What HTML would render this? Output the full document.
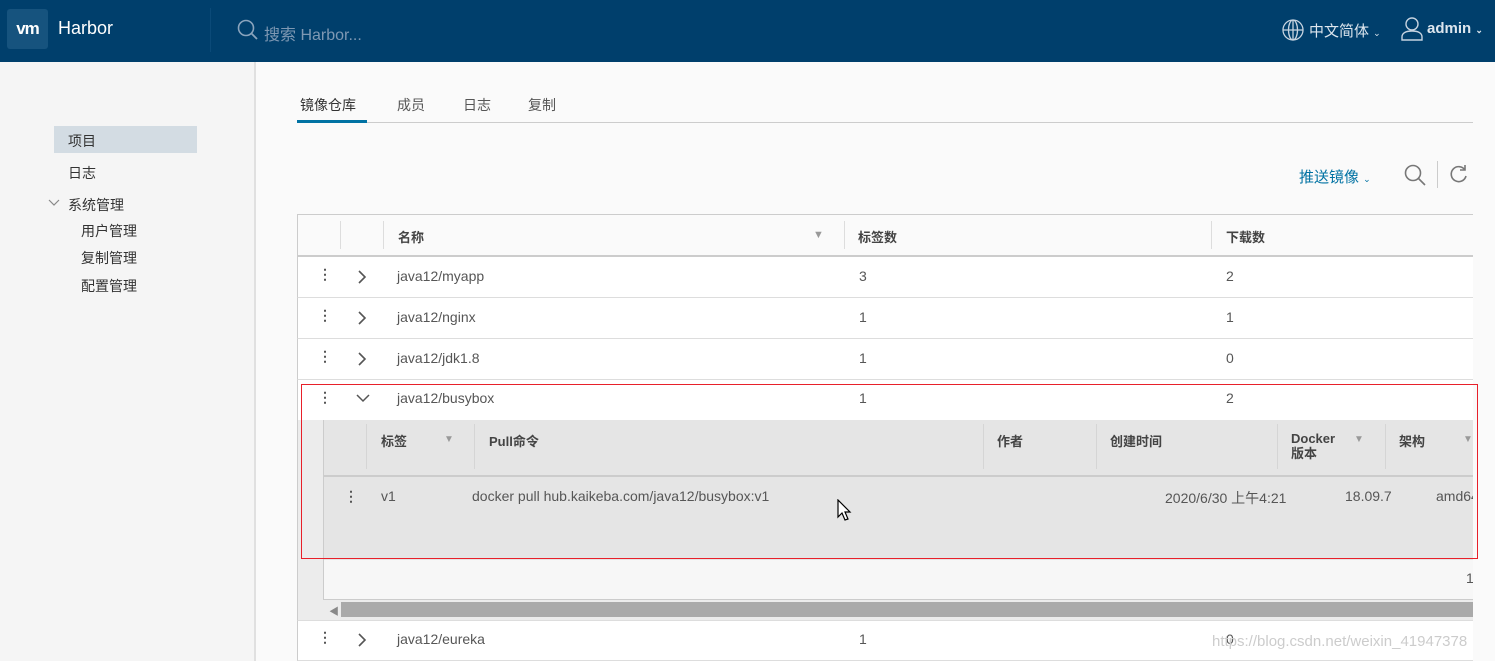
<!DOCTYPE html>
<html><head><meta charset="utf-8"><style>
*{margin:0;padding:0;box-sizing:border-box}
body{width:1495px;height:661px;overflow:hidden;background:#fafafa;font-family:"Liberation Sans","Noto Sans CJK SC",sans-serif;color:#565656;font-size:14px;position:relative}
.a{position:absolute;white-space:nowrap}
.hdr{left:0;top:0;width:1495px;height:62px;background:#003f6c}
.side{left:0;top:62px;width:256px;height:599px;background:#f5f5f5;border-right:2px solid #e0e0e0}
.row{left:297px;width:1176px;height:41px;background:#fff;border-bottom:1px solid #ddd}
.dots{font-weight:bold;color:#555}
.th{font-size:13px;font-weight:bold;color:#444}
.vs{width:1px;background:#ddd}
</style></head><body>
<div class="a hdr"></div>
<div class="a" style="left:7px;top:9px;width:41px;height:40px;background:#16537e;border-radius:3px;color:#fff;font-weight:bold;font-size:17px;text-align:center;line-height:40px;letter-spacing:-1px">vm</div>
<div class="a" style="left:58px;top:18px;color:#fff;font-size:18px">Harbor</div>
<div class="a" style="left:210px;top:8px;width:1px;height:44px;background:#0b4a78"></div>
<svg class="a" style="left:237px;top:19px" width="22" height="22" viewBox="0 0 22 22"><circle cx="9" cy="9" r="7.5" fill="none" stroke="#8aa4bd" stroke-width="1.6"/><line x1="14.5" y1="14.5" x2="20" y2="20" stroke="#8aa4bd" stroke-width="1.8"/></svg>
<div class="a" style="left:264px;top:21px;color:#7e98b3;font-size:16px">搜索 Harbor...</div>
<svg class="a" style="left:1281px;top:18px" width="24" height="24" viewBox="0 0 24 24" fill="none" stroke="#c6d3e0" stroke-width="1.3"><circle cx="12" cy="12" r="10"/><ellipse cx="12" cy="12" rx="4.5" ry="10"/><line x1="2" y1="12" x2="22" y2="12"/><line x1="12" y1="2" x2="12" y2="22"/></svg>
<div class="a" style="left:1309px;top:20px;color:#dde6ee;font-size:15px">中文简体 <span style="font-size:9px">⌄</span></div>
<svg class="a" style="left:1400px;top:16px" width="24" height="26" viewBox="0 0 24 26" fill="none" stroke="#c6d3e0" stroke-width="1.4"><circle cx="12" cy="8" r="6"/><path d="M2 24v-3c0-4 4-6 10-6s10 2 10 6v3z"/></svg>
<div class="a" style="left:1427px;top:20px;color:#dde6ee;font-size:15px;font-weight:bold">admin <span style="font-size:9px">⌄</span></div>

<div class="a side"></div>
<div class="a" style="left:54px;top:126px;width:143px;height:27px;background:#d3dce3"></div>
<div class="a" style="left:68px;top:131px;color:#333">项目</div>
<div class="a" style="left:68px;top:163px;color:#333">日志</div>
<svg class="a" style="left:48px;top:199px" width="12" height="8" viewBox="0 0 12 8"><path d="M1 1l5 5 5-5" fill="none" stroke="#888" stroke-width="1.2"/></svg>
<div class="a" style="left:68px;top:195px;color:#333">系统管理</div>
<div class="a" style="left:81px;top:221px;color:#333">用户管理</div>
<div class="a" style="left:81px;top:248px;color:#333">复制管理</div>
<div class="a" style="left:81px;top:276px;color:#333">配置管理</div>

<div class="a" style="left:297px;top:122px;width:1176px;height:1px;background:#ccc"></div>
<div class="a" style="left:300px;top:95px;color:#333">镜像仓库</div>
<div class="a" style="left:297px;top:120px;width:70px;height:3px;background:#0072a3"></div>
<div class="a" style="left:397px;top:95px">成员</div>
<div class="a" style="left:463px;top:95px">日志</div>
<div class="a" style="left:528px;top:95px">复制</div>

<div class="a" style="left:1299px;top:166px;color:#0072a3;font-size:15px">推送镜像 <span style="font-size:9px">⌄</span></div>
<svg class="a" style="left:1403px;top:163px" width="24" height="24" viewBox="0 0 24 24" fill="none" stroke="#777" stroke-width="1.6"><circle cx="10" cy="10" r="7.5"/><line x1="15.5" y1="15.5" x2="22" y2="22"/></svg>
<div class="a" style="left:1437px;top:161px;width:1px;height:27px;background:#ccc"></div>
<svg class="a" style="left:1449px;top:164px" width="20" height="20" viewBox="0 0 20 20" fill="none" stroke="#777" stroke-width="1.6"><path d="M16 6A7.5 7.5 0 1 0 17 12"/><path d="M16 1v5h-5"/></svg>

<div class="a" style="left:297px;top:214px;width:1176px;height:43px;border-top:1px solid #ccc;border-left:1px solid #ccc;border-bottom:2px solid #ccc;background:#fafafa"></div>
<div class="a vs" style="left:340px;top:221px;height:28px"></div>
<div class="a vs" style="left:383px;top:221px;height:28px"></div>
<div class="a vs" style="left:844px;top:221px;height:28px"></div>
<div class="a vs" style="left:1211px;top:221px;height:28px"></div>
<div class="a th" style="left:398px;top:227px">名称</div>
<div class="a" style="left:813px;top:229px;color:#999;font-size:11px">▼</div>
<div class="a th" style="left:858px;top:227px">标签数</div>
<div class="a th" style="left:1226px;top:227px">下载数</div>

<div class="a row" style="top:257px;border-left:1px solid #ccc"></div>
<div class="a row" style="top:298px;border-left:1px solid #ccc"></div>
<div class="a row" style="top:339px;border-left:1px solid #ccc"></div>
<div class="a row" style="top:380px;border-left:1px solid #ccc"></div>
<div class="a" style="left:297px;top:420px;width:1176px;height:200px;background:#ececec;border-left:1px solid #ccc"></div>
<div class="a" style="left:323px;top:420px;width:1150px;height:180px;background:#f7f7f7;border-left:1px solid #ccc;border-bottom:1px solid #ccc"></div>
<div class="a" style="left:324px;top:420px;width:1149px;height:140px;background:#e5e5e5"></div>
<div class="a" style="left:324px;top:475px;width:1149px;height:2px;background:#ccc"></div>
<div class="a" style="left:341px;top:602px;width:1132px;height:15px;background:#aaa"></div>
<div class="a" style="left:329px;top:603px;color:#888;font-size:10px">◀</div>
<div class="a row" style="top:620px;border-left:1px solid #ccc;border-top:1px solid #ddd"></div>

<svg width="0" height="0" style="position:absolute"><defs><symbol id="cr" viewBox="0 0 10 14"><path d="M2 1l6 6-6 6" fill="none" stroke="#555" stroke-width="1.6"/></symbol></defs></svg>
<div class="a dots" style="left:318px;top:266px">⋮</div><svg class="a" style="left:357px;top:270px" width="10" height="14"><use href="#cr"/></svg>
<div class="a" style="left:397px;top:268px">java12/myapp</div><div class="a" style="left:859px;top:268px">3</div><div class="a" style="left:1226px;top:268px">2</div>
<div class="a dots" style="left:318px;top:307px">⋮</div><svg class="a" style="left:357px;top:311px" width="10" height="14"><use href="#cr"/></svg>
<div class="a" style="left:397px;top:309px">java12/nginx</div><div class="a" style="left:859px;top:309px">1</div><div class="a" style="left:1226px;top:309px">1</div>
<div class="a dots" style="left:318px;top:348px">⋮</div><svg class="a" style="left:357px;top:352px" width="10" height="14"><use href="#cr"/></svg>
<div class="a" style="left:397px;top:350px">java12/jdk1.8</div><div class="a" style="left:859px;top:350px">1</div><div class="a" style="left:1226px;top:350px">0</div>
<div class="a dots" style="left:318px;top:389px">⋮</div>
<svg class="a" style="left:355px;top:392px" width="16" height="12" viewBox="0 0 16 12"><path d="M2 3l6 6 6-6" fill="none" stroke="#555" stroke-width="1.5"/></svg>
<div class="a" style="left:397px;top:390px">java12/busybox</div><div class="a" style="left:859px;top:390px">1</div><div class="a" style="left:1226px;top:390px">2</div>

<div class="a vs" style="left:366px;top:424px;height:45px;background:#d5d5d5"></div>
<div class="a vs" style="left:474px;top:424px;height:45px;background:#d5d5d5"></div>
<div class="a vs" style="left:983px;top:424px;height:45px;background:#d5d5d5"></div>
<div class="a vs" style="left:1096px;top:424px;height:45px;background:#d5d5d5"></div>
<div class="a vs" style="left:1277px;top:424px;height:45px;background:#d5d5d5"></div>
<div class="a vs" style="left:1385px;top:424px;height:45px;background:#d5d5d5"></div>
<div class="a th" style="left:381px;top:431px">标签</div><div class="a" style="left:444px;top:434px;color:#999;font-size:10px">▼</div>
<div class="a th" style="left:489px;top:431px">Pull命令</div>
<div class="a th" style="left:997px;top:431px">作者</div>
<div class="a th" style="left:1110px;top:431px">创建时间</div>
<div class="a th" style="left:1291px;top:431px;line-height:15px">Docker<br>版本</div><div class="a" style="left:1354px;top:434px;color:#999;font-size:10px">▼</div>
<div class="a th" style="left:1399px;top:431px">架构</div><div class="a" style="left:1463px;top:434px;color:#999;font-size:10px">▼</div>
<div class="a dots" style="left:344px;top:488px">⋮</div>
<div class="a" style="left:381px;top:488px">v1</div>
<div class="a" style="left:472px;top:488px">docker pull hub.kaikeba.com/java12/busybox:v1</div>
<div class="a" style="left:1165px;top:488px">2020/6/30 上午4:21</div>
<div class="a" style="left:1345px;top:488px">18.09.7</div>
<div class="a" style="left:1436px;top:488px;width:37px;overflow:hidden">amd64</div>
<div class="a" style="left:1466px;top:570px">1</div>
<svg class="a" style="left:837px;top:499px" width="16" height="24" viewBox="0 0 16 24"><path d="M1 1v17l4-4 3 7 3-1-3-7h5z" fill="#fff" stroke="#000" stroke-width="1.2"/></svg>

<div class="a dots" style="left:318px;top:629px">⋮</div><svg class="a" style="left:357px;top:633px" width="10" height="14"><use href="#cr"/></svg>
<div class="a" style="left:397px;top:631px">java12/eureka</div><div class="a" style="left:859px;top:631px">1</div><div class="a" style="left:1226px;top:631px">0</div>
<div class="a" style="left:1212px;top:633px;color:#ccc;font-size:15px">https://blog.csdn.net/weixin_41947378</div>
<div class="a" style="left:1473px;top:62px;width:22px;height:599px;background:#fafafa"></div>
<div class="a" style="left:301px;top:384px;width:1177px;height:175px;border:1px solid #e8202a"></div>
</body></html>
